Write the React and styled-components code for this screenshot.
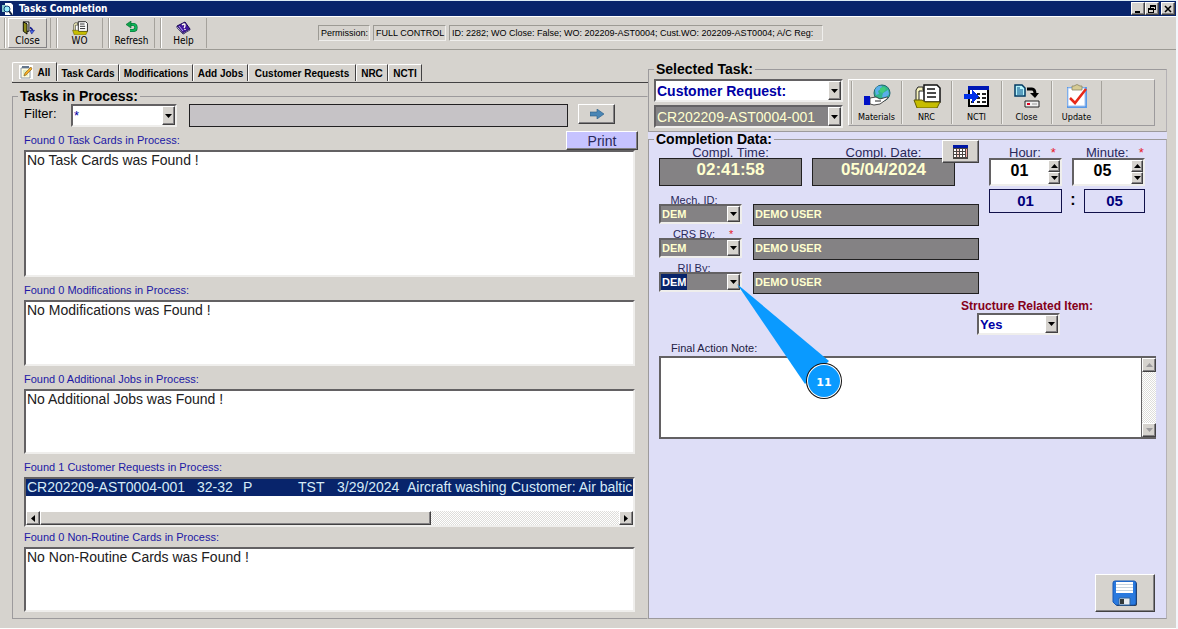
import React from "react";
import styled, { createGlobalStyle, css } from "styled-components";

const face = "#d6d3ce";
const navy = "#08246b";
const lavender = "#dedef7";
const cream = "#ffffce";
const slate = "#848284";

const GlobalStyle = createGlobalStyle`
  * { box-sizing: border-box; }
  body { margin: 0; background: #f3f6fb; font-family: "Liberation Sans", Arial, sans-serif; font-size: 13px; color: #000; }
  button, input, select, textarea { font: inherit; color: inherit; margin: 0; border-radius: 0; }
  svg { display: block; }
`;

const raised = css`
  border: 1px solid;
  border-color: #fff #424142 #424142 #fff;
  box-shadow: inset -1px -1px 0 #848284;
  background: ${face};
`;

const sunken = css`
  border: 2px solid;
  border-color: #636163 #efeeec #efeeec #636163;
`;

const Window = styled.div`
  min-height: 100vh;
  margin-right: 2px;
  padding-top: 1px;
  padding-bottom: 1px;
  display: flex;
  flex-direction: column;
  background: ${face};
  border-top: 1px solid #dcebf5;
  border-bottom: 1px solid #fff;
`;

const TitleBar = styled.header`
  display: flex;
  align-items: center;
  gap: 5px;
  height: 15px;
  padding: 0 1px 0 1px;
  margin-top: -1px;
  background: ${navy};
  color: #fff;
`;

const Title = styled.h1`
  flex: 1;
  margin: 0;
  font: bold 10px/14px "DejaVu Sans Condensed", "DejaVu Sans", sans-serif;
`;

const WindowButtons = styled.div`
  display: flex;
  height: 13px;
`;

const WindowButton = styled.button`
  ${raised}
  width: 14px;
  height: 13px;
  padding: 0;
  display: grid;
  place-items: center;
  margin-left: ${(p) => (p.$apart ? 2 : 0)}px;
`;

const Toolbar = styled.nav`
  display: flex;
  align-items: stretch;
  height: 34px;
  padding: 1px 0 1px 4px;
  border-top: 1px solid #fff;
  border-bottom: 1px solid #9c9a94;
`;

const ToolSlot = styled.div`
  display: flex;
  justify-content: center;
  width: 47px;
  padding: 0 3px;
  border-left: 1px solid #a5a29c;
  border-right: 1px solid #a5a29c;
  box-shadow: inset 1px 0 0 #fff;
  margin-right: 5px;
`;

const ToolButton = styled.button`
  flex: 1;
  display: flex;
  flex-direction: column;
  align-items: center;
  justify-content: space-between;
  padding: 2px 0 0;
  border: 1px solid;
  border-color: ${(p) => (p.$raised ? "#fff #848284 #848284 #fff" : "transparent")};
  background: ${face};
  font: 10px/12px "DejaVu Sans Condensed", "DejaVu Sans", sans-serif;
`;

const StatusStrip = styled.div`
  display: flex;
  gap: 3px;
  align-self: center;
  margin-left: 106px;
  font-size: 9px;
  line-height: 14px;
  white-space: pre;
`;

const StatusCell = styled.span`
  width: ${(p) => p.$width}px;
  padding-left: 2px;
  overflow: hidden;
  border: 1px solid;
  border-color: #9c9a94 #efeeec #efeeec #9c9a94;
`;

const Main = styled.main`
  flex: 1;
  display: grid;
  grid-template-columns: minmax(0, 636fr) minmax(0, 519fr);
  padding: 12px 9px 8px 12px;
`;

const Column = styled.div`
  display: flex;
  flex-direction: column;
  min-width: 0;
`;

const Tabs = styled.div`
  display: flex;
  align-items: flex-end;
  height: 21px;
  padding-bottom: 1px;
  border-bottom: 1px solid #424142;
  margin-bottom: 6px;
`;

const Tab = styled.button`
  display: flex;
  align-items: center;
  justify-content: center;
  gap: 5px;
  width: ${(p) => p.$width}px;
  height: ${(p) => (p.$active ? 19 : 17)}px;
  padding: 0;
  background: ${face};
  border: 1px solid;
  border-color: #fff #424142 ${face} #fff;
  border-bottom: 0;
  border-top-left-radius: 2px;
  font-size: 10px;
  font-weight: bold;
  white-space: nowrap;
`;

const Group = styled.fieldset`
  flex: ${(p) => (p.$grow ? 1 : "none")};
  min-width: 0;
  margin: 0;
  padding: 0;
  border: 1px solid #9c9a9c;
  border-right-color: ${(p) => (p.$open ? "transparent" : "#b5b2b5")};
  display: flex;
  flex-direction: column;
`;

const Legend = styled.legend`
  height: ${(p) => (p.$clipped ? 12 : 15)}px;
  overflow: hidden;
  margin-left: 5px;
  padding: 0 2px;
  font-size: 14px;
  line-height: ${(p) => (p.$clipped ? 12 : 15)}px;
  font-weight: bold;
`;

const FilterRow = styled.div`
  display: flex;
  align-items: flex-start;
  height: 27px;
  padding: 0 32px 0 11px;
`;

const FilterLabel = styled.label`
  width: 47px;
  font-size: 13px;
  line-height: 20px;
`;

const Combo = styled.div`
  ${sunken}
  position: relative;
  display: flex;
  width: ${(p) => p.$width}px;
  height: ${(p) => p.$height}px;
  background: ${(p) => (p.$dark ? slate : "#fff")};
`;

const ComboSelect = styled.select`
  appearance: none;
  flex: ${(p) => (p.$highlight ? "none" : "1")};
  min-width: 0;
  border: 0;
  outline: 0;
  padding: 0 0 0 1px;
  margin-right: ${(p) => (p.$highlight ? "auto" : "0")};
  background: ${(p) => (p.$highlight ? navy : "transparent")};
  color: ${(p) => p.$color};
  font-size: ${(p) => p.$size}px;
  font-weight: ${(p) => (p.$regular ? "normal" : "bold")};
`;

const ArrowBox = styled.span`
  ${raised}
  flex: none;
  width: 13px;
  display: grid;
  place-items: center;
`;

const ReadOnly = styled.input`
  min-width: 0;
  width: 100%;
  height: ${(p) => p.$height}px;
  padding: ${(p) => (p.$center ? "0 0 4px" : "0 0 2px 1px")};
  border: 1px solid #212021;
  background: ${(p) => p.$bg || slate};
  color: ${cream};
  font-size: ${(p) => p.$size || 11}px;
  font-weight: bold;
  text-align: ${(p) => (p.$center ? "center" : "left")};
  outline: 0;
`;

const FilterText = styled.div`
  flex: 1;
  margin: 0 10px 0 12px;
  display: flex;
`;

const GoButton = styled.button`
  ${raised}
  width: 37px;
  height: 20px;
  padding: 0;
  display: grid;
  place-items: center;
`;

const Section = styled.section`
  padding: 0 12px 0 11px;
`;

const SectionHead = styled.div`
  display: flex;
  justify-content: space-between;
  align-items: flex-end;
  height: ${(p) => p.$height}px;
  margin-right: -3px;
`;

const SectionTitle = styled.h2`
  margin: 0;
  padding-bottom: 3px;
  color: #2118a5;
  font-size: 11px;
  line-height: 14px;
  font-weight: normal;
`;

const PrintButton = styled.button`
  ${raised}
  width: 72px;
  height: 19px;
  padding: 0;
  background: #c6c3ff;
  color: #29285a;
  font-size: 14px;
  line-height: 16px;
`;

const ListBox = styled.div`
  ${sunken}
  height: ${(p) => p.$height}px;
  display: flex;
  flex-direction: column;
  justify-content: space-between;
  background: #fff;
  color: #212021;
  font-size: 14px;
  line-height: 17px;
  overflow: hidden;
`;

const ListText = styled.p`
  margin: 0;
  padding-left: 1px;
`;

const ListRow = styled.div`
  display: grid;
  grid-template-columns: 170px 46px 55px 39px 70px 104px auto;
  padding-left: 1px;
  background: ${navy};
  color: #d6ebf7;
  white-space: nowrap;
`;

const dither = css`
  background: repeating-conic-gradient(#fff 0 25%, #deddda 0 50%) 0 0 / 2px 2px;
`;

const HScroll = styled.div`
  ${dither}
  display: flex;
  height: 14px;
`;

const VScroll = styled.div`
  ${dither}
  display: flex;
  flex-direction: column;
  justify-content: space-between;
  width: 14px;
`;

const ScrollButton = styled.button`
  ${raised}
  width: 14px;
  height: 14px;
  padding: 0;
  display: grid;
  place-items: center;
`;

const Thumb = styled.div`
  ${raised}
  width: 391px;
  margin-right: auto;
`;

const TaskRow = styled.div`
  display: flex;
  gap: 5px;
  padding: 2px 11px 3px 5px;
`;

const TaskSelects = styled.div`
  display: flex;
  flex-direction: column;
  gap: 3px;
`;

const ActionBar = styled.div`
  flex: 1;
  display: flex;
  height: 47px;
  padding: 1px 2px;
  border: 1px solid;
  border-color: #fff #9c9a9c #9c9a9c #fff;
`;

const ActionButton = styled.button`
  display: flex;
  flex-direction: column;
  align-items: center;
  justify-content: space-between;
  width: 50px;
  padding: 3px 0 0;
  border: 0;
  border-left: 1px solid #a5a29c;
  box-shadow: inset 1px 0 0 #efeeec;
  background: ${face};
  font: 9px/14px "DejaVu Sans Condensed", "DejaVu Sans", sans-serif;
`;

const ActionEnd = styled.span`
  border-left: 1px solid #a5a29c;
`;

const Completion = styled.div`
  flex: 1;
  display: flex;
  padding-top: 1px;
  background: ${lavender};
`;

const Form = styled.div`
  flex: 1;
  display: flex;
  flex-direction: column;
  padding: 0 10px 6px 10px;
`;

const FormTop = styled.div`
  display: flex;
  gap: 10px;
`;

const People = styled.div`
  width: 320px;
`;

const Times = styled.div`
  position: relative;
  display: grid;
  grid-template-columns: 143px 143px;
  gap: 10px;
  margin-bottom: 6px;
`;

const Field = styled.div`
  display: flex;
  flex-direction: column;
`;

const FieldLabel = styled.label`
  height: 13px;
  line-height: 15px;
  text-align: center;
  font-size: 13px;
  color: #29285a;
`;

const CalendarButton = styled.button`
  ${raised}
  position: absolute;
  top: -5px;
  left: 283px;
  width: 37px;
  height: 23px;
  padding: 0;
  display: grid;
  place-items: center;
`;

const Person = styled.div`
  display: grid;
  grid-template-columns: 83px 1fr;
  column-gap: 11px;
`;

const PersonLabel = styled.div`
  grid-column: 1 / -1;
  display: flex;
  height: 12px;
  overflow: hidden;
  font-size: 11px;
  line-height: 16px;
  color: #29285a;

  label { width: 70px; text-align: center; }
`;

const Star = styled.span`
  color: #e71829;
`;

const Clock = styled.div`
  display: grid;
  grid-template-columns: 73px 22px 61px;
  grid-template-rows: 13px 28px 27px;
`;

const ClockLabel = styled.div`
  display: flex;
  gap: 10px;
  padding-left: ${(p) => p.$indent}px;
  margin-left: ${(p) => (p.$wide ? -12 : 0)}px;
  line-height: 15px;
  font-size: 13px;
  color: #29285a;
  white-space: nowrap;
`;

const Spinner = styled.div`
  ${sunken}
  display: flex;
  height: 28px;
  background: #fff;
  margin-left: ${(p) => (p.$wide ? -12 : 0)}px;
`;

const SpinInput = styled.input`
  flex: 1;
  min-width: 0;
  border: 0;
  outline: 0;
  padding: 0 0 3px;
  text-align: center;
  font-size: 16px;
  font-weight: bold;
`;

const SpinButtons = styled.div`
  display: grid;
  width: 12px;
`;

const SpinButton = styled.button`
  ${raised}
  padding: 0;
  display: grid;
  place-items: center;
`;

const ClockOut = styled.output`
  margin-top: 3px;
  border: 1px solid #10104a;
  color: #00007b;
  text-align: center;
  font-size: 15px;
  font-weight: bold;
  line-height: 22px;
`;

const Colon = styled.span`
  text-align: center;
  font-size: 16px;
  font-weight: bold;
  line-height: 27px;
`;

const Structure = styled.div`
  margin: 6px 0 0 302px;
  width: 140px;

  label { display: block; color: #84001a; font-size: 12px; line-height: 13px; font-weight: bold; white-space: nowrap; }
  div { margin-left: 16px; }
`;

const NoteLabel = styled.label`
  margin: 6px 0 0 12px;
  font-size: 11px;
  line-height: 15px;
  color: #212042;
`;

const NoteBox = styled.div`
  display: flex;
  height: 83px;
  border: 2px solid #636163;
  border-right-width: 0;
  background: #fff;
`;

const NoteText = styled.textarea`
  flex: 1;
  border: 0;
  border-right: 1px solid #636163;
  outline: 0;
  padding: 2px;
  resize: none;
  overflow: hidden;
`;

const SaveButton = styled.button`
  ${raised}
  align-self: flex-end;
  width: 60px;
  height: 38px;
  margin-top: auto;
  margin-right: 1px;
  padding: 0;
  display: grid;
  place-items: center;
`;

const Callout = styled.div`
  position: absolute;
  z-index: 2;
  left: 75px;
  top: 9px;
  pointer-events: none;
`;

const paths = { down: "M0 0h7L3.5 4z", up: "M0 4h7L3.5 0z", left: "M4 0v7L0 3.5z", right: "M0 0v7l4-3.5z" };

function Arrow({ dir = "down", color = "#000" }) {
  const side = dir === "left" || dir === "right";
  const w = side ? 4 : 7;
  const h = side ? 7 : 4;
  return (
    <svg width={w} height={h} viewBox={`0 0 ${w} ${h}`} aria-hidden="true">
      <path d={paths[dir]} fill={color} />
    </svg>
  );
}

function DropDown({ id, label, value, width, height, dark, color, size, regular, highlight, children }) {
  return (
    <Combo $width={width} $height={height} $dark={dark}>
      <ComboSelect id={id} aria-label={label} $color={color} $size={size} $regular={regular} $highlight={highlight} defaultValue={value}>
        <option>{value}</option>
      </ComboSelect>
      <ArrowBox><Arrow /></ArrowBox>
      {children}
    </Combo>
  );
}

const AppIcon = () => (
  <svg width="13" height="14" viewBox="0 0 13 14">
    <path d="M4 1h6l2 2v10H4z" fill="#fff" />
    <path d="M1 3h4v7H1z" fill="#8cc" />
    <circle cx="6" cy="7" r="3" fill="#9ef" stroke="#147" />
    <path d="M8 9l3 4" stroke="#124" strokeWidth="2" />
  </svg>
);

const DoorIcon = () => (
  <svg width="15" height="15" viewBox="0 0 15 15">
    <path d="M3 1h6v10H6" fill="#fff" stroke="#000" />
    <path d="M3 1l4 2v11l-4-3z" fill="#8c8a18" stroke="#000" />
    <path d="M10 7q3 1 3 4" stroke="#10188c" strokeWidth="1.500" fill="none" />
    <path d="M10 10h5l-3 4z" fill="#4a6ade" stroke="#10188c" strokeWidth=".6" />
  </svg>
);

const FolderIcon = ({ size = 15 }) => (
  <svg width={size} height={Math.round(size * 0.86)} viewBox="0 0 28 24">
    <path d="M3 17V6l2-3h5v3h3" fill="#f7f3bd" stroke="#222" />
    <path d="M6 7h7v11H6z" fill="#fff" stroke="#222" />
    <path d="M11 1h13l3 3v14H11z" fill="#fff" stroke="#111" strokeWidth="1.5" />
    <path d="M14 5h8M14 9h9M14 13h9" stroke="#111" strokeWidth="1.5" />
    <path d="M1 16h8l3 2h15l-3 6H4z" fill="#c6bd00" stroke="#635d00" />
  </svg>
);

const RefreshIcon = () => (
  <svg width="13" height="13" viewBox="0 0 13 13">
    <path d="M5 3.500h3q3 0 3 3t-3 3H5" fill="none" stroke="#063" strokeWidth="3.2" />
    <path d="M5 3.500h3q3 0 3 3t-3 3H5" fill="none" stroke="#10b55a" strokeWidth="2" />
    <path d="M6 0v7L1 3.500z" fill="#10a54a" stroke="#063" strokeWidth=".6" />
  </svg>
);

const HelpIcon = () => (
  <svg width="15" height="14" viewBox="0 0 15 14">
    <path d="M1 5l8-4 5 7-7 5z" fill="#42189c" stroke="#180852" />
    <path d="M1 5v2l6 6 7-4V8l-7 4z" fill="#fff" stroke="#180852" strokeWidth=".7" />
    <path d="M6 4q3-2 3 0T8 7m1 1v1" stroke="#ffe" fill="none" strokeWidth="1.4" />
    <path d="M3 5l4 5" stroke="#b59cff" />
  </svg>
);

const NoteIcon = () => (
  <svg width="14" height="14" viewBox="0 0 14 14">
    <rect width="14" height="14" fill="#fff" />
    <path d="M2 3h9v10H2z" fill="#fffbe0" stroke="#8c9aa5" />
    <path d="M3 2h7" stroke="#63758c" strokeWidth="2" />
    <path d="M4 6h4M4 8h3M4 10h5" stroke="#bda" />
    <path d="M5 11l1-3 6-6 1 2-6 6z" fill="#f5ae21" stroke="#845510" strokeWidth=".6" />
  </svg>
);

const MaterialsIcon = () => (
  <svg width="28" height="24" viewBox="0 0 28 24">
    <circle cx="19" cy="9" r="8" fill="#31b58c" stroke="#216573" />
    <path d="M12 6q2-5 7-4l-1 3-3 2 1 3-3 1zM20 9l5-3 1 4-4 5-3-2z" fill="#5aaeea" />
    <path d="M17 4l4-1 2 2-3 4-3-1z" fill="#42cb7b" />
    <path d="M7 14l6-1 4 2 7-2q2 0 0 2l-7 5-6 1-4-1z" fill="#fff" stroke="#222" strokeWidth=".8" />
    <path d="M12 17h6" stroke="#222" />
    <path d="M1 12h6v9H1z" fill="#0010c6" />
  </svg>
);

const NctiIcon = () => (
  <svg width="26" height="24" viewBox="0 0 26 24" shapeRendering="crispEdges">
    <path d="M5 3h19v19H5z" fill="#fff" stroke="#000" strokeWidth="2" />
    <path d="M4 2h21v4H4z" fill="#0018b5" />
    <path d="M13 9h3v2h-3zM18 9h4v2h-4zM13 13h3v2h-3zM18 13h4v2h-4zM13 17h3v2h-3zM18 17h4v2h-4zM7 17h3v2H7z" fill="#222" />
    <path d="M0 10h8V6l7 6.500-7 6.500v-4H0z" fill="#0030e7" />
  </svg>
);

const CloseTaskIcon = () => (
  <svg width="26" height="24" viewBox="0 0 26 24">
    <path d="M1 1h7l3 3v8H1z" fill="#b5f3fb" stroke="#003a63" strokeWidth="1.5" />
    <path d="M3 4h3M3 6h6M3 8h6M3 10h6" stroke="#004a84" />
    <path d="M13 5h5q3 0 3 5" fill="none" stroke="#000" strokeWidth="3" />
    <path d="M16 9h9l-4 5z" fill="#000" />
    <path d="M11 17h14v6H11z" fill="#efefef" stroke="#222" />
    <path d="M13 20h3" stroke="#e00020" strokeWidth="2" />
    <path d="M18 20h5" stroke="#999" />
  </svg>
);

const UpdateIcon = () => (
  <svg width="22" height="25" viewBox="0 0 22 25">
    <path d="M1 3h20v21H1z" fill="#5a9ae7" />
    <path d="M2 4h17v18H2z" fill="#fff" stroke="#a5c3ef" />
    <path d="M6 2h2q3-3 6 0h2v4H6z" fill="#d6cb94" stroke="#8c8663" strokeWidth=".8" />
    <path d="M4 14l5 5L20 5" fill="none" stroke="#e72818" strokeWidth="2.500" />
  </svg>
);

const CalendarIcon = () => (
  <svg width="15" height="14" viewBox="0 0 15 14" shapeRendering="crispEdges">
    <path d="M0 0h15v14H0z" fill="#4a4542" />
    <path d="M0 0h15v3H0z" fill="#0018a5" />
    {[4, 7, 10].map((y) => [1, 4, 7, 10].map((x) => <rect key={`${x}-${y}`} x={x} y={y} width="2" height="2" fill={x === 4 ? "#ffd6ce" : "#fff"} />))}
    <path d="M13 4v8" stroke="#f7aaa5" />
  </svg>
);

const SaveIcon = () => (
  <svg width="26" height="27" viewBox="0 0 26 27">
    <path d="M4 2h19q2 0 2 2v20q0 2-2 2H5l-3-3z" fill="#293039" />
    <path d="M3 1h19q2 0 2 2v20q0 2-2 2H4l-3-3V3q0-2 2-2z" fill="#2979de" stroke="#1859b5" />
    <path d="M4 2h17v11H4z" fill="#fff" />
    <path d="M4 4.500h17M4 7.500h17M4 10.500h17" stroke="#c6d3de" />
    <path d="M7 18h11v7H7z" fill="#e7ebef" stroke="#31659c" />
    <path d="M8 19h4v5H8z" fill="#313839" />
  </svg>
);

const tabs = [
  ["Task Cards", 62], ["Modifications", 74], ["Add Jobs", 55], ["Customer Requests", 108], ["NRC", 32], ["NCTI", 34],
];

const actions = [
  ["Materials", MaterialsIcon], ["NRC", () => <FolderIcon size={28} />], ["NCTI", NctiIcon], ["Close", CloseTaskIcon], ["Update", UpdateIcon],
];

function TaskList({ title, head, height, message, action, children }) {
  return (
    <Section>
      <SectionHead $height={head}>
        <SectionTitle>{title}</SectionTitle>
        {action}
      </SectionHead>
      <ListBox $height={height}>{message ? <ListText>{message}</ListText> : children}</ListBox>
    </Section>
  );
}

function PersonRow({ id, label, required, highlight, children }) {
  return (
    <Person>
      <PersonLabel>
        <label htmlFor={id}>{label}</label>
        {required && <Star>*</Star>}
      </PersonLabel>
      <DropDown id={id} value="DEM" width={83} height={20} dark color={highlight ? "#fff" : cream} size={11} highlight={highlight}>
        {children}
      </DropDown>
      <ReadOnly aria-label={`${label} name`} readOnly value="DEMO USER" $height={22} />
    </Person>
  );
}

function Spin({ id, value, wide }) {
  return (
    <Spinner $wide={wide}>
      <SpinInput id={id} defaultValue={value} />
      <SpinButtons>
        <SpinButton aria-label="Increase"><Arrow dir="up" /></SpinButton>
        <SpinButton aria-label="Decrease"><Arrow /></SpinButton>
      </SpinButtons>
    </Spinner>
  );
}

export default function App() {
  return (
    <Window>
      <GlobalStyle />
      <TitleBar>
        <AppIcon />
        <Title>Tasks Completion</Title>
        <WindowButtons>
          <WindowButton aria-label="Minimize">
            <svg width="8" height="8"><path d="M1 6h5v2H1z" /></svg>
          </WindowButton>
          <WindowButton aria-label="Restore">
            <svg width="8" height="8" fill="none" stroke="#000" shapeRendering="crispEdges"><path d="M2.500 3V.5h5v4H6M2 1.500h6M.5 3.500h5v4h-5zM0 4.500h6" /></svg>
          </WindowButton>
          <WindowButton aria-label="Close window" $apart>
            <svg width="8" height="8" stroke="#000" strokeWidth="1.6"><path d="M1 1l6 6M7 1L1 7" /></svg>
          </WindowButton>
        </WindowButtons>
      </TitleBar>

      <Toolbar>
        <ToolSlot><ToolButton $raised><DoorIcon />Close</ToolButton></ToolSlot>
        <ToolSlot><ToolButton><FolderIcon size={16} />WO</ToolButton></ToolSlot>
        <ToolSlot><ToolButton><RefreshIcon />Refresh</ToolButton></ToolSlot>
        <ToolSlot><ToolButton><HelpIcon />Help</ToolButton></ToolSlot>
        <StatusStrip>
          <StatusCell $width={52}>Permission:</StatusCell>
          <StatusCell $width={73}>FULL CONTROL</StatusCell>
          <StatusCell $width={374}>ID: 2282; WO Close: False; WO: 202209-AST0004; Cust.WO: 202209-AST0004; A/C Reg:</StatusCell>
        </StatusStrip>
      </Toolbar>

      <Main>
        <Column>
          <Tabs role="tablist">
            <Tab role="tab" aria-selected="true" $active $width={45}><NoteIcon />All</Tab>
            {tabs.map(([name, width]) => <Tab role="tab" key={name} $width={width}>{name}</Tab>)}
          </Tabs>
          <Group $grow $open>
            <Legend>Tasks in Process:</Legend>
            <FilterRow>
              <FilterLabel htmlFor="filter">Filter:</FilterLabel>
              <DropDown id="filter" value="*" width={106} height={23} color="#0000a5" size={13} regular />
              <FilterText>
                <ReadOnly aria-label="Filter description" readOnly value="" $height={23} $bg="#c6c3c6" />
              </FilterText>
              <GoButton aria-label="Apply filter">
                <svg width="14" height="10" viewBox="0 0 14 10"><path d="M0 3h7V0l7 5-7 5V7H0z" fill="#4a86b5" stroke="#295a84" strokeWidth=".6" /></svg>
              </GoButton>
            </FilterRow>
            <TaskList title="Found 0 Task Cards in Process:" head={19} height={127} message="No Task Cards was Found !" action={<PrintButton>Print</PrintButton>} />
            <TaskList title="Found 0 Modifications in Process:" head={23} height={66} message="No Modifications was Found !" />
            <TaskList title="Found 0 Additional Jobs in Process:" head={23} height={65} message="No Additional Jobs was Found !" />
            <TaskList title="Found 1 Customer Requests in Process:" head={23} height={50}>
              <ListRow>
                <span>CR202209-AST0004-001</span><span>32-32</span><span>P</span><span>TST</span><span>3/29/2024</span><span>Aircraft washing</span><span>Customer: Air baltic</span>
              </ListRow>
              <HScroll>
                <ScrollButton aria-label="Scroll left"><Arrow dir="left" /></ScrollButton>
                <Thumb />
                <ScrollButton aria-label="Scroll right"><Arrow dir="right" /></ScrollButton>
              </HScroll>
            </TaskList>
            <TaskList title="Found 0 Non-Routine Cards in Process:" head={20} height={65} message="No Non-Routine Cards was Found !" />
          </Group>
        </Column>

        <Column>
          <Group>
            <Legend>Selected Task:</Legend>
            <TaskRow>
              <TaskSelects>
                <DropDown label="Task type" value="Customer Request:" width={189} height={23} color="#0000a5" size={14} />
                <DropDown label="Task number" value="CR202209-AST0004-001" width={189} height={23} dark color={cream} size={14} regular />
              </TaskSelects>
              <ActionBar>
                {actions.map(([name, Icon]) => <ActionButton key={name}><Icon />{name}</ActionButton>)}
                <ActionEnd />
              </ActionBar>
            </TaskRow>
          </Group>

          <Completion>
            <Group $grow>
              <Legend $clipped>Completion Data:</Legend>
              <Form>
                <FormTop>
                  <People>
                    <Times>
                      <Field>
                        <FieldLabel htmlFor="ctime">Compl. Time:</FieldLabel>
                        <ReadOnly id="ctime" readOnly value="02:41:58" $height={28} $size={17} $center />
                      </Field>
                      <Field>
                        <FieldLabel htmlFor="cdate">Compl. Date:</FieldLabel>
                        <ReadOnly id="cdate" readOnly value="05/04/2024" $height={28} $size={17} $center />
                      </Field>
                      <CalendarButton aria-label="Pick date"><CalendarIcon /></CalendarButton>
                    </Times>
                    <PersonRow id="mech" label="Mech. ID:" />
                    <PersonRow id="crs" label="CRS By:" required />
                    <PersonRow id="rii" label="RII By:" highlight>
                      <Callout>
                        <svg width="110" height="120" viewBox="0 0 110 120" role="img" aria-label="Step 11">
                          <path d="M1 1L93 78 69 101z" fill="#0a9aff" />
                          <circle cx="88" cy="98" r="18" fill="#111" />
                          <circle cx="88" cy="98" r="17" fill="#fff" />
                          <circle cx="88" cy="98" r="16" fill="#0a9aff" />
                          <text x="88" y="103" textAnchor="middle" fill="#fff" fontSize="11" fontWeight="bold" fontFamily="DejaVu Sans, sans-serif">11</text>
                        </svg>
                      </Callout>
                    </PersonRow>
                  </People>
                  <Clock>
                    <ClockLabel $indent={20}><label htmlFor="hour">Hour:</label><Star>*</Star></ClockLabel>
                    <span />
                    <ClockLabel $indent={14} $wide><label htmlFor="minute">Minute:</label><Star>*</Star></ClockLabel>
                    <Spin id="hour" value="01" />
                    <span />
                    <Spin id="minute" value="05" wide />
                    <ClockOut>01</ClockOut>
                    <Colon>:</Colon>
                    <ClockOut>05</ClockOut>
                  </Clock>
                </FormTop>
                <Structure>
                  <label htmlFor="structure">Structure Related Item:</label>
                  <DropDown id="structure" value="Yes" width={83} height={22} color="#0000a5" size={13} />
                </Structure>
                <NoteLabel htmlFor="note">Final Action Note:</NoteLabel>
                <NoteBox>
                  <NoteText id="note" />
                  <VScroll>
                    <ScrollButton aria-label="Scroll up"><Arrow dir="up" color="#9c9a9c" /></ScrollButton>
                    <ScrollButton aria-label="Scroll down"><Arrow color="#9c9a9c" /></ScrollButton>
                  </VScroll>
                </NoteBox>
                <SaveButton aria-label="Save"><SaveIcon /></SaveButton>
              </Form>
            </Group>
          </Completion>
        </Column>
      </Main>
    </Window>
  );
}
